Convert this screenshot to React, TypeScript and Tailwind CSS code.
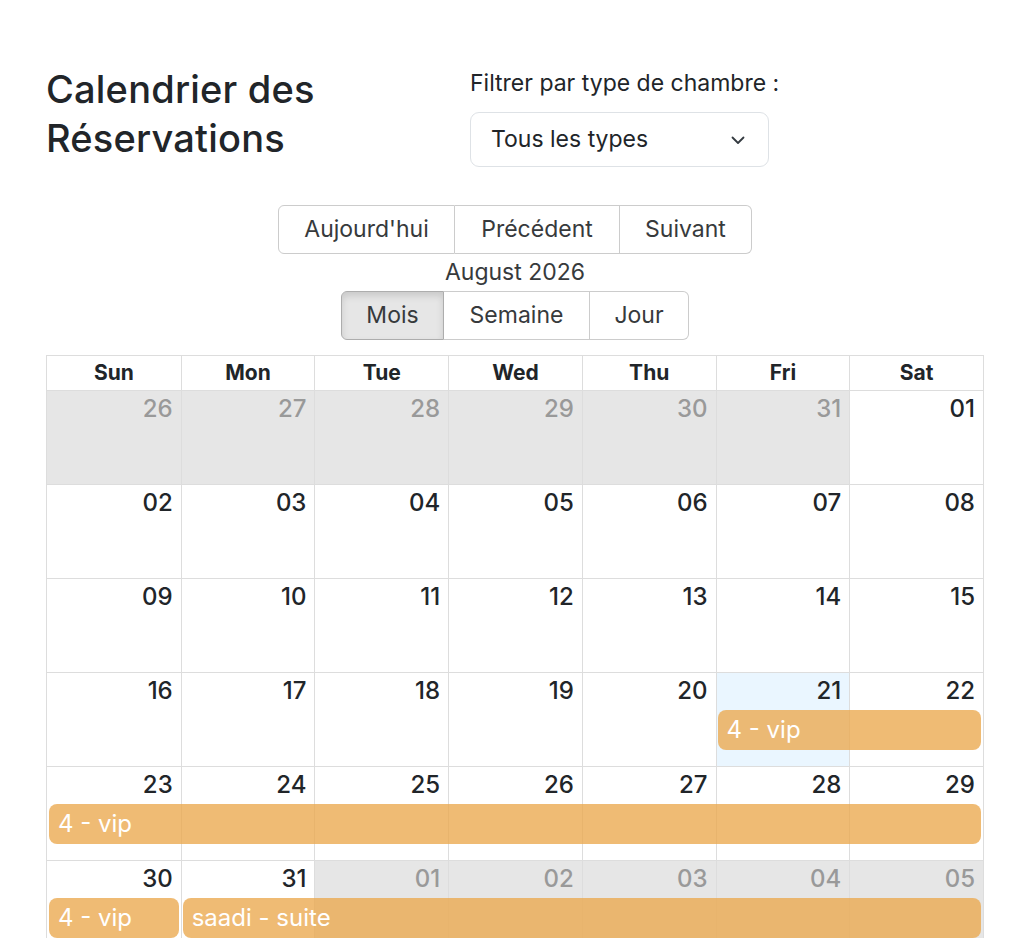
import React from "react";

type Day = { label: string; off?: boolean; today?: boolean };
type Ev = { title: string; start: number; span: number };

const DAYS = ["Sun", "Mon", "Tue", "Wed", "Thu", "Fri", "Sat"];

const WEEKS: { days: Day[]; events: Ev[] }[] = [
  {
    days: [
      { label: "26", off: true },
      { label: "27", off: true },
      { label: "28", off: true },
      { label: "29", off: true },
      { label: "30", off: true },
      { label: "31", off: true },
      { label: "01" },
    ],
    events: [],
  },
  { days: ["02", "03", "04", "05", "06", "07", "08"].map((l) => ({ label: l })), events: [] },
  { days: ["09", "10", "11", "12", "13", "14", "15"].map((l) => ({ label: l })), events: [] },
  {
    days: ["16", "17", "18", "19", "20", "21", "22"].map((l) => ({ label: l, today: l === "21" })),
    events: [{ title: "4 - vip", start: 6, span: 2 }],
  },
  {
    days: ["23", "24", "25", "26", "27", "28", "29"].map((l) => ({ label: l })),
    events: [{ title: "4 - vip", start: 1, span: 7 }],
  },
  {
    days: [
      { label: "30" },
      { label: "31" },
      { label: "01", off: true },
      { label: "02", off: true },
      { label: "03", off: true },
      { label: "04", off: true },
      { label: "05", off: true },
    ],
    events: [
      { title: "4 - vip", start: 1, span: 1 },
      { title: "saadi - suite", start: 2, span: 6 },
    ],
  },
];

const COL_START: Record<number, string> = {
  1: "col-start-1",
  2: "col-start-2",
  3: "col-start-3",
  4: "col-start-4",
  5: "col-start-5",
  6: "col-start-6",
  7: "col-start-7",
};
const COL_SPAN: Record<number, string> = {
  1: "col-span-1",
  2: "col-span-2",
  3: "col-span-3",
  4: "col-span-4",
  5: "col-span-5",
  6: "col-span-6",
  7: "col-span-7",
};

function Chevron() {
  return (
    <svg width="16" height="16" viewBox="0 0 16 16" fill="none" stroke="#343a40" strokeWidth="1.8" strokeLinecap="round" strokeLinejoin="round">
      <path d="M2.5 5.5l5.5 5.5 5.5-5.5" />
    </svg>
  );
}

function WeekRow({ days, events }: { days: Day[]; events: Ev[] }) {
  return (
    <div className="relative h-[94px] border-t border-[#dddddd]">
      {/* background cells */}
      <div className="grid grid-cols-7 h-full">
        {days.map((d, i) => (
          <div
            key={i}
            className={`h-full ${i > 0 ? "border-l border-[#dddddd]" : ""} ${
              d.off ? "bg-[#e6e6e6]" : d.today ? "bg-[#eaf6ff]" : "bg-white"
            }`}
          />
        ))}
      </div>
      {/* content layer */}
      <div className="absolute inset-0">
        <div className="grid grid-cols-7 h-[37px]">
          {days.map((d, i) => (
            <div
              key={i}
              className={`text-right pr-[8px] text-[24px] leading-[36px] font-medium ${
                d.off ? "text-[#999999]" : "text-[#212529]"
              }`}
            >
              {d.label}
            </div>
          ))}
        </div>
        <div className="grid grid-cols-7">
          {events.map((e, i) => (
            <div key={i} className={`${COL_START[e.start]} ${COL_SPAN[e.span]} row-start-1 px-[2px]`}>
              <div className="h-[40px] rounded-[8px] bg-[#ebaa51]/80 text-white text-[24px] leading-[40px] px-[9px] whitespace-nowrap overflow-hidden">
                {e.title}
              </div>
            </div>
          ))}
        </div>
      </div>
    </div>
  );
}

export default function App() {
  return (
    <div className="min-h-screen bg-white text-[#212529] font-['Inter','Liberation_Sans',sans-serif]">
      <div className="pl-[46px] pr-[40px] pt-[65px] pb-10">
        <div className="flex">
          <h1 className="w-[424px] text-[38px] leading-[49px] font-medium tracking-[0.2px]">
            Calendrier des
            <br />
            Réservations
          </h1>
          <div>
            <label className="block text-[23px] leading-[36px] mb-[11px] text-[#212529]">
              Filtrer par type de chambre :
            </label>
            <div className="w-[299px] h-[55px] border border-[#dee2e6] rounded-[9px] flex items-center justify-between pl-[20px] pr-[22px] text-[23px]">
              <span>Tous les types</span>
              <Chevron />
            </div>
          </div>
        </div>

        <div className="mt-[38px] flex flex-col items-center text-[#373a3c]">
          <div className="flex text-[23px]">
            <button className="w-[177px] h-[49px] border border-[#cccccc] rounded-l-[6px] bg-white">Aujourd'hui</button>
            <button className="w-[165px] h-[49px] border border-l-0 border-[#cccccc] bg-white">Précédent</button>
            <button className="w-[132px] h-[49px] border border-l-0 border-[#cccccc] rounded-r-[6px] bg-white">Suivant</button>
          </div>
          <div className="text-[23px] leading-[37px]">August 2026</div>
          <div className="flex text-[23px]">
            <button className="w-[103px] h-[49px] border border-[#adadad] rounded-l-[6px] bg-[#e6e6e6] shadow-[inset_0_4px_7px_rgba(0,0,0,0.125)]">
              Mois
            </button>
            <button className="w-[146px] h-[49px] border border-l-0 border-[#cccccc] bg-white">Semaine</button>
            <button className="w-[99px] h-[49px] border border-l-0 border-[#cccccc] rounded-r-[6px] bg-white">Jour</button>
          </div>
        </div>

        <div className="mt-[15px] border border-[#dddddd]">
          <div className="grid grid-cols-7 h-[34px]">
            {DAYS.map((d, i) => (
              <div
                key={d}
                className={`text-center font-bold text-[21px] leading-[34px] ${i > 0 ? "border-l border-[#dddddd]" : ""}`}
              >
                {d}
              </div>
            ))}
          </div>
          {WEEKS.map((w, i) => (
            <WeekRow key={i} days={w.days} events={w.events} />
          ))}
        </div>
      </div>
    </div>
  );
}
